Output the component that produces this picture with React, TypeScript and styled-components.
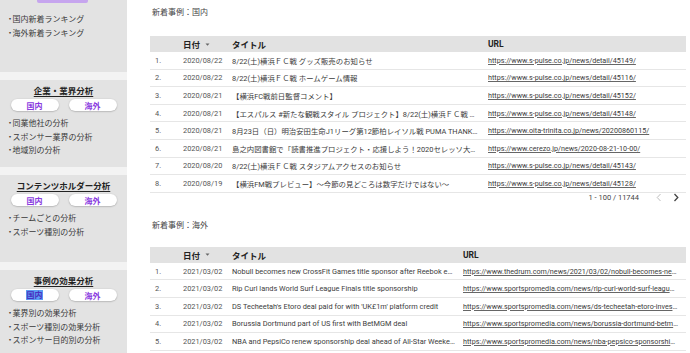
import React from "react";
import styled, { createGlobalStyle } from "styled-components";

const GlobalStyle = createGlobalStyle`
  html, body {
    margin: 0;
    padding: 0;
    height: 100%;
    overflow: hidden;
    background: #ffffff;
  }
  body {
    font-family: Roboto, "Noto Sans CJK JP", "Noto Sans", sans-serif;
    color: #333;
  }
  * { box-sizing: border-box; }
`;

const Page = styled.div`
  display: grid;
  grid-template-columns: 127px 1fr;
  height: 100vh;
  overflow: hidden;
`;

const Sidebar = styled.aside`
  background: #e3e3e3;
  display: flex;
  flex-direction: column;
  font-family: "Noto Sans CJK JP", sans-serif;
`;

const TopSection = styled.div`
  height: 72px;
`;

const PurpleStub = styled.div`
  width: 51px;
  height: 3px;
  margin-left: 37px;
  background: #c6a5ee;
  border-radius: 0 0 2px 2px;
`;

const Band = styled.div`
  height: 8px;
  background: #f3f3f3;
  flex: none;
`;

const SideSection = styled.div`
  min-height: 87px;
  padding-top: 4px;
`;

const SectionTitle = styled.div`
  text-align: center;
  font-size: 8.5px;
  line-height: 12px;
  font-weight: 700;
  color: #222;
  text-decoration: underline;
  text-underline-offset: 1.5px;
`;

const ButtonRow = styled.div`
  display: flex;
  justify-content: center;
  gap: 10px;
  margin-top: 3px;
`;

const Pill = styled.div`
  width: 48px;
  height: 12px;
  border-radius: 6px;
  background: #ffffff;
  box-shadow: 0 0.5px 1.5px rgba(0, 0, 0, 0.3);
  display: flex;
  align-items: center;
  justify-content: center;
  font-size: 8px;
  font-weight: 700;
  color: #8a3be0;
`;

const Selected = styled.span`
  background: #5b9cf3;
  color: #4a2fc0;
  line-height: 10px;
  padding: 0 0.5px;
`;

const ItemList = styled.ul<{ $top: number }>`
  list-style: none;
  margin: ${(p) => p.$top}px 0 0 0;
  padding: 0 0 0 6px;
`;

const Item = styled.li`
  font-size: 8px;
  line-height: 13.5px;
  color: #3a3a3a;
  white-space: nowrap;
  &::before {
    content: "・";
    margin-right: -1.5px;
  }
`;

const Main = styled.main`
  padding: 6px 4px 0 23px;
  overflow: hidden;
`;

const Heading = styled.div<{ $mt: number; $mb: number }>`
  font-size: 8px;
  line-height: 12px;
  color: #444;
  padding-left: 2px;
  margin-top: ${(p) => p.$mt}px;
  margin-bottom: ${(p) => p.$mb}px;
  font-family: "Noto Sans CJK JP", sans-serif;
`;

const HeaderRow = styled.div<{ $cols: string }>`
  display: grid;
  grid-template-columns: ${(p) => p.$cols};
  height: 16px;
  align-items: center;
  background: #e2e2e2;
  font-size: 8.5px;
  font-weight: 700;
  color: #222;
  font-family: Roboto, "Noto Sans CJK JP", sans-serif;
`;

const HeadCell = styled.div`
  display: flex;
  align-items: center;
  gap: 5px;
`;

const Row = styled.div<{ $cols: string }>`
  display: grid;
  grid-template-columns: ${(p) => p.$cols};
  height: 17.6px;
  align-items: center;
  border-bottom: 1px solid #e6e6e6;
  font-size: 7.4px;
  color: #3c3c3c;
`;

const Cell = styled.div<{ $muted?: boolean; $pl?: number }>`
  min-width: 0;
  white-space: nowrap;
  overflow: hidden;
  text-overflow: ellipsis;
  padding-right: 8px;
  padding-left: ${(p) => p.$pl ?? 0}px;
  color: ${(p) => (p.$muted ? "#555" : "#3c3c3c")};
`;

const UrlCell = styled(Cell)`
  font-size: 7.2px;
`;

const Link = styled.a`
  color: #3a3a3a;
  text-decoration: underline;
  text-decoration-color: #666;
`;

const Pager = styled.div`
  display: flex;
  justify-content: flex-end;
  align-items: center;
  height: 10px;
  font-size: 7.5px;
  color: #444;
  padding-right: 2px;
`;

const PagerText = styled.span`
  margin-right: 11px;
`;

const PagerBtn = styled.span`
  display: inline-flex;
  width: 17px;
  justify-content: center;
`;

const SortArrow = () => (
  <svg width="5" height="3" viewBox="0 0 5 3">
    <path d="M0.5 0.5 L4.5 0.5 L2.5 2.7 Z" fill="#666" />
  </svg>
);

const Chevron = ({ dir, color, w }: { dir: "l" | "r"; color: string; w: number }) => (
  <svg width="6" height="9" viewBox="0 0 6 9">
    <path
      d={dir === "l" ? "M4.5 1 L1.2 4.5 L4.5 8" : "M1.5 1 L4.8 4.5 L1.5 8"}
      fill="none"
      stroke={color}
      strokeWidth={w}
    />
  </svg>
);

type Rec = { date: string; title: string; url: string };

const domestic: Rec[] = [
  { date: "2020/08/22", title: "8/22(土)横浜ＦＣ戦 グッズ販売のお知らせ", url: "https://www.s-pulse.co.jp/news/detail/45149/" },
  { date: "2020/08/22", title: "8/22(土)横浜ＦＣ戦 ホームゲーム情報", url: "https://www.s-pulse.co.jp/news/detail/45116/" },
  { date: "2020/08/21", title: "【横浜FC戦前日監督コメント】", url: "https://www.s-pulse.co.jp/news/detail/45152/" },
  { date: "2020/08/21", title: "【エスパルス #新たな観戦スタイル プロジェクト】8/22(土)横浜ＦＣ戦 リモート応援のご案内", url: "https://www.s-pulse.co.jp/news/detail/45148/" },
  { date: "2020/08/21", title: "8月23日（日）明治安田生命J1リーグ第12節柏レイソル戦 PUMA THANKS DAY開催のお知らせ", url: "https://www.oita-trinita.co.jp/news/20200860115/" },
  { date: "2020/08/21", title: "島之内図書館で「読書推進プロジェクト・応援しよう！2020セレッソ大阪」を開催", url: "https://www.cerezo.jp/news/2020-08-21-10-00/" },
  { date: "2020/08/20", title: "8/22(土)横浜ＦＣ戦 スタジアムアクセスのお知らせ", url: "https://www.s-pulse.co.jp/news/detail/45143/" },
  { date: "2020/08/19", title: "【横浜FM戦プレビュー】～今節の見どころは数字だけではない～", url: "https://www.s-pulse.co.jp/news/detail/45128/" },
];

const overseas: Rec[] = [
  { date: "2021/03/02", title: "Nobull becomes new CrossFit Games title sponsor after Reebok ends deal", url: "https://www.thedrum.com/news/2021/03/02/nobull-becomes-new-crossfit-games-title-sponsor" },
  { date: "2021/03/02", title: "Rip Curl lands World Surf League Finals title sponsorship", url: "https://www.sportspromedia.com/news/rip-curl-world-surf-league-finals-sponsorship" },
  { date: "2021/03/02", title: "DS Techeetah's Etoro deal paid for with 'UK£1m' platform credit", url: "https://www.sportspromedia.com/news/ds-techeetah-etoro-investment-formula-e" },
  { date: "2021/03/02", title: "Borussia Dortmund part of US first with BetMGM deal", url: "https://www.sportspromedia.com/news/borussia-dortmund-betmgm-partnership" },
  { date: "2021/03/02", title: "NBA and PepsiCo renew sponsorship deal ahead of All-Star Weekend", url: "https://www.sportspromedia.com/news/nba-pepsico-sponsorship-renewal" },
  { date: "2021/03/01", title: "Adidas extends partnership with Manchester United", url: "https://www.sportspromedia.com/news/adidas-manchester-united-extension" },
];

const DataTable = ({ rows, cols }: { rows: Rec[]; cols: string }) => (
  <div>
    <HeaderRow $cols={cols}>
      <div />
      <HeadCell>
        日付 <SortArrow />
      </HeadCell>
      <HeadCell>タイトル</HeadCell>
      <HeadCell>URL</HeadCell>
    </HeaderRow>
    {rows.map((r, i) => (
      <Row key={i} $cols={cols}>
        <Cell $muted $pl={5}>{i + 1}.</Cell>
        <Cell $muted>{r.date}</Cell>
        <Cell>{r.title}</Cell>
        <UrlCell>
          <Link>{r.url}</Link>
        </UrlCell>
      </Row>
    ))}
  </div>
);

const Section = ({
  title,
  items,
  selectedDomestic,
}: {
  title: string;
  items: string[];
  selectedDomestic?: boolean;
}) => (
  <SideSection>
    <SectionTitle>{title}</SectionTitle>
    <ButtonRow>
      <Pill>{selectedDomestic ? <Selected>国内</Selected> : "国内"}</Pill>
      <Pill>海外</Pill>
    </ButtonRow>
    <ItemList $top={5}>
      {items.map((t) => (
        <Item key={t}>{t}</Item>
      ))}
    </ItemList>
  </SideSection>
);

export default function App() {
  return (
    <>
      <GlobalStyle />
      <Page>
        <Sidebar>
          <TopSection>
            <PurpleStub />
            <ItemList $top={9}>
              <Item>国内新着ランキング</Item>
              <Item>海外新着ランキング</Item>
            </ItemList>
          </TopSection>
          <Band />
          <Section title="企業・業界分析" items={["同業他社の分析", "スポンサー業界の分析", "地域別の分析"]} />
          <Band />
          <Section title="コンテンツホルダー分析" items={["チームごとの分析", "スポーツ種別の分析"]} />
          <Band />
          <Section
            title="事例の効果分析"
            items={["業界別の効果分析", "スポーツ種別の効果分析", "スポンサー目的別の分析"]}
            selectedDomestic
          />
        </Sidebar>
        <Main>
          <Heading $mt={0} $mb={18}>新着事例：国内</Heading>
          <DataTable rows={domestic} cols="33px 49px 256px 198px" />
          <Pager>
            <PagerText>1 - 100 / 11744</PagerText>
            <PagerBtn>
              <Chevron dir="l" color="#b5b5b5" w={0.9} />
            </PagerBtn>
            <PagerBtn>
              <Chevron dir="r" color="#444" w={1.3} />
            </PagerBtn>
          </Pager>
          <Heading $mt={16} $mb={16}>新着事例：海外</Heading>
          <DataTable rows={overseas} cols="33px 49px 231px 223px" />
        </Main>
      </Page>
    </>
  );
}
